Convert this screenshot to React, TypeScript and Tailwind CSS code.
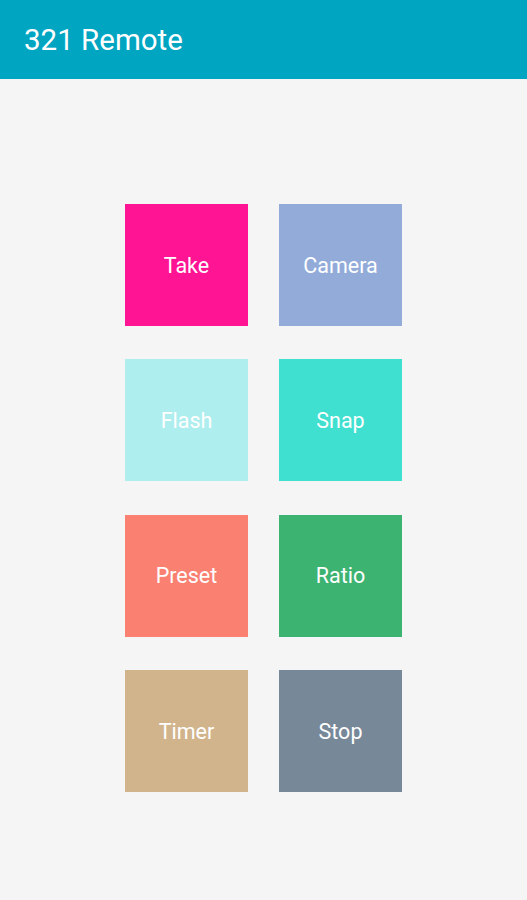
export default function App() {
  const items: { label: string; bg: string }[] = [
    { label: "Take", bg: "bg-[#FF1493]" },
    { label: "Camera", bg: "bg-[#92ABD9]" },
    { label: "Flash", bg: "bg-[#AFEEEE]" },
    { label: "Snap", bg: "bg-[#40E0D0]" },
    { label: "Preset", bg: "bg-[#FA8072]" },
    { label: "Ratio", bg: "bg-[#3CB371]" },
    { label: "Timer", bg: "bg-[#D2B48C]" },
    { label: "Stop", bg: "bg-[#778899]" },
  ];
  return (
    <div className="w-[527px] h-[900px] bg-[#F5F5F5] flex flex-col" style={{ fontFamily: "Roboto, sans-serif" }}>
      <div className="h-[79px] bg-[#00A5C2] flex items-center pl-[24px] shrink-0">
        <span className="text-white text-[29.5px] leading-none pt-[2px]">321 Remote</span>
      </div>
      <div className="flex justify-center pt-[125px]">
        <div className="grid grid-cols-[123px_123px] gap-x-[31px] gap-y-[33.3px]">
          {items.map((it) => (
            <div
              key={it.label}
              className={`${it.bg} w-[123px] h-[122px] flex items-center justify-center text-white text-[21.5px] pt-[2px]`}
            >
              {it.label}
            </div>
          ))}
        </div>
      </div>
    </div>
  );
}
